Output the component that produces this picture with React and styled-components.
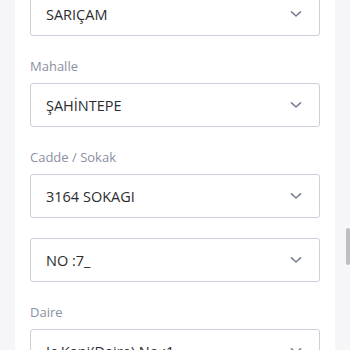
import React from "react";
import styled, { createGlobalStyle } from "styled-components";

const GlobalStyle = createGlobalStyle`
  html, body {
    margin: 0;
    padding: 0;
    height: 100%;
    overflow: hidden;
    background: #f6f6f8;
    font-family: "Open Sans", "Liberation Sans", sans-serif;
  }
`;

const Page = styled.div`
  position: relative;
  height: 350px;
  overflow: hidden;
  background: #f6f6f8;
`;

const Card = styled.div`
  margin: -8px 15px 0;
  padding: 0 15px;
  background: #ffffff;
  display: flex;
  flex-direction: column;
  gap: 20px;
`;

const Field = styled.div`
  display: flex;
  flex-direction: column;
`;

const Label = styled.label`
  font-size: 13px;
  line-height: 20px;
  margin-bottom: 7px;
  color: #8b90a2;
`;

const SelectBox = styled.div`
  height: 44px;
  box-sizing: border-box;
  border: 1px solid #ccd0da;
  border-radius: 3px;
  display: flex;
  align-items: center;
  justify-content: space-between;
  padding: 0 17px 0 15px;
  font-size: 14.5px;
  color: #2c2c2e;
`;

const Chevron = styled.svg`
  width: 12px;
  height: 8px;
  flex-shrink: 0;
`;

const ScrollThumb = styled.div`
  position: absolute;
  right: 0;
  top: 228px;
  width: 4px;
  height: 37px;
  border-radius: 2px;
  background: #bfbfc2;
`;

const fields = [
  { value: "SARIÇAM" },
  { label: "Mahalle", value: "ŞAHİNTEPE" },
  { label: "Cadde / Sokak", value: "3164 SOKAGI" },
  { value: "NO :7_" },
  { label: "Daire", value: "Iç Kapi(Daire) No :1" },
];

const App = () => {
  return (
    <>
      <GlobalStyle />
      <Page>
        <Card>
          {fields.map((f, i) => (
            <Field key={i}>
              {f.label && <Label>{f.label}</Label>}
              <SelectBox>
                <span>{f.value}</span>
                <Chevron viewBox="0 0 12 8">
                  <path
                    d="M1.5 1.8 L6 6 L10.5 1.8"
                    fill="none"
                    stroke="#7c8192"
                    strokeWidth="1.6"
                    strokeLinecap="round"
                    strokeLinejoin="round"
                  />
                </Chevron>
              </SelectBox>
            </Field>
          ))}
        </Card>
        <ScrollThumb />
      </Page>
    </>
  );
};

export default App;
